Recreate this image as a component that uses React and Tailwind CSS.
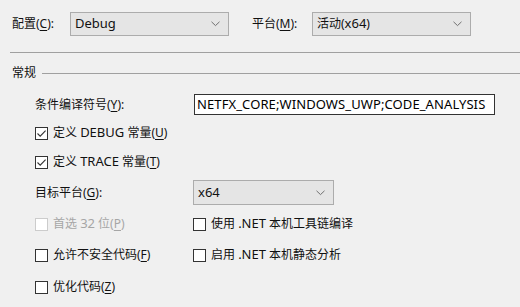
import React from "react";

const font = { fontFamily: "'Noto Sans', 'Noto Sans CJK SC', sans-serif" };

// 下拉框右侧的小箭头
const Chevron = () => (
  <svg width="9" height="6" viewBox="0 0 9 6" className="shrink-0">
    <path d="M0.5 0.8 L4.5 4.6 L8.5 0.8" fill="none" stroke="#707070" strokeWidth="1" />
  </svg>
);

const Dropdown = ({ value, className }) => (
  <div
    className={`flex items-center justify-between h-[24px] border border-[#acacac] bg-[#e5e5e5] pl-[4px] pr-[8px] text-[12px] text-[#111] ${className}`}
  >
    <span>{value}</span>
    <Chevron />
  </div>
);

const Check = ({ checked, disabled }) => (
  <div
    className={`w-[13px] h-[13px] shrink-0 border bg-[#fff] flex items-center justify-center ${
      disabled ? "border-[#cccccc] bg-[#f0f0f0]" : "border-[#333333]"
    }`}
  >
    {checked && (
      <svg width="11" height="11" viewBox="0 0 11 11">
        <path d="M1.5 5.5 L4.2 8.2 L9.6 2.6" fill="none" stroke="#333" strokeWidth="1.1" />
      </svg>
    )}
  </div>
);

const CheckRow = ({ checked, disabled, children, className = "" }) => (
  <div className={`flex items-center gap-[5px] ${className}`}>
    <Check checked={checked} disabled={disabled} />
    <span className={`text-[12px] ${disabled ? "text-[#a6a6a6]" : "text-[#111]"}`}>{children}</span>
  </div>
);

const U = ({ children }) => <span className="underline underline-offset-2">{children}</span>;
// 拉丁字母在参考图里略大一点
const L = ({ children }) => <span className="text-[13px]">{children}</span>;

export default function App() {
  return (
    <div style={font} className="w-[520px] h-[307px] bg-[#f0f0f0] overflow-hidden text-[#111]">
      {/* 配置 / 平台 */}
      <div className="flex items-center pt-[12px]">
        <span className="ml-[12px] w-[58px] text-[12px]">
          配置(<U>C</U>):
        </span>
        <Dropdown value={<L>Debug</L>} className="w-[159px]" />
        <span className="ml-[23px] w-[60px] text-[12px]">
          平台(<U>M</U>):
        </span>
        <Dropdown value={<>活动(<L>x64</L>)</>} className="w-[159px]" />
      </div>

      <div className="mt-[16px] ml-[10px] h-px bg-[#a0a0a0]" />

      {/* 常规 */}
      <div className="flex items-center h-[16px] mt-[12px]">
        <span className="ml-[12px] text-[12px]">常规</span>
        <div className="flex-1 h-px bg-[#a0a0a0] ml-[6px]" />
      </div>

      <div className="ml-[35px]">
        <div className="flex items-center h-[21px] mt-[13px]">
          <span className="w-[159px] text-[12px]">
            条件编译符号(<U>Y</U>):
          </span>
          <div className="w-[301px] h-[21px] border border-[#333] bg-[#fff] pl-[2px] flex items-center text-[13px] tracking-[0.1px] text-[#000] whitespace-nowrap overflow-hidden">
            NETFX_CORE;WINDOWS_UWP;CODE_ANALYSIS
          </div>
        </div>

        <CheckRow checked className="h-[20px] mt-[8px]">
          定义 <L>DEBUG</L> 常量(<U>U</U>)
        </CheckRow>
        <CheckRow checked className="h-[20px] mt-[9px]">
          定义 <L>TRACE</L> 常量(<U>T</U>)
        </CheckRow>

        <div className="flex items-center mt-[8px]">
          <span className="w-[158px] text-[12px]">
            目标平台(<U>G</U>):
          </span>
          <Dropdown value={<L>x64</L>} className="w-[141px] h-[25px]" />
        </div>

        <div className="grid grid-cols-[158px_1fr] mt-[9px]">
          <CheckRow disabled className="h-[20px]">
            首选 <L>32</L> 位(<U>P</U>)
          </CheckRow>
          <CheckRow className="h-[20px]">
            使用 <L>.NET</L> 本机工具链编译
          </CheckRow>
          <CheckRow className="h-[20px] mt-[11px]">
            允许不安全代码(<U>F</U>)
          </CheckRow>
          <CheckRow className="h-[20px] mt-[11px]">
            启用 <L>.NET</L> 本机静态分析
          </CheckRow>
          <CheckRow className="h-[20px] mt-[12px]">
            优化代码(<U>Z</U>)
          </CheckRow>
        </div>
      </div>
    </div>
  );
}
